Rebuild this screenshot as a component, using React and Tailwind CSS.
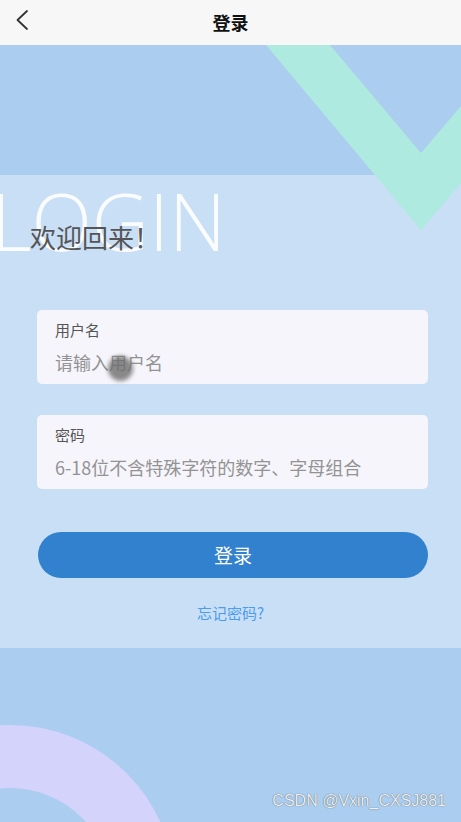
import React from "react";

const cjk = "font-['Noto_Sans_CJK_SC','Noto_Sans',sans-serif]";

const Field = ({ label, placeholder }) => (
  <label className="block bg-[#f6f5fb] rounded-[5px] px-[18px] pt-[10px] pb-[7px]">
    <span className="block text-[15px] leading-[20px] text-[#555]">{label}</span>
    <input
      type="text"
      placeholder={placeholder}
      className="mt-[7px] block w-full h-[30px] bg-transparent outline-none text-[18px] text-[#333] placeholder:text-[#939393]"
    />
  </label>
);

export default function App() {
  return (
    <div className={`relative w-full h-[822px] overflow-hidden bg-[#abcdef] ${cjk}`}>
      <header className="relative h-[45px] bg-[#f7f7f7] flex items-center justify-center">
        <button className="absolute left-[12px] top-[7px] w-[20px] h-[26px] flex items-center justify-center">
          <svg width="14" height="22" viewBox="0 0 14 22" fill="none">
            <path d="M12 2 L2.5 11 L12 20" stroke="#333" strokeWidth="1.8" strokeLinecap="round" strokeLinejoin="round" />
          </svg>
        </button>
        <h1 className="text-[18px] font-bold text-[#111]">登录</h1>
      </header>

      <div className="h-[130px]" />

      <section className="relative h-[473px] bg-[#c9dff5] pt-[44px]">
        <span className="absolute left-[-9px] top-[6px] font-['Open_Sans',sans-serif] font-[350] text-[79px] leading-none text-white/90 select-none">
          LOGIN
        </span>
        <h2 className="relative pl-[30px] text-[26px] leading-[36px] text-[#555]">欢迎回来！</h2>
        <div className="relative mt-[55px] ml-[37px] mr-[33px] flex flex-col gap-[31px]">
          <Field label="用户名" placeholder="请输入用户名" />
          <Field label="密码" placeholder="6-18位不含特殊字符的数字、字母组合" />
        </div>
        <div className="ml-[38px] mr-[33px] mt-[43px]">
          <button className="w-full h-[46px] rounded-full bg-[#3181cf] text-white text-[19px]">登录</button>
        </div>
        <p className="mt-[24px] text-center text-[15px] text-[#4c9cf0]">忘记密码?</p>
      </section>

      <svg className="absolute top-[45px] right-0" width="195" height="185" viewBox="0 0 195 185">
        <polygon points="0,0 64,0 155,108 195,61 195,138 155,185" fill="#aeeae0" />
      </svg>

      <svg className="absolute left-0 top-[648px]" width="461" height="174" viewBox="0 0 461 174">
        <circle cx="10" cy="242" r="133.5" fill="none" stroke="#d3d3fc" strokeWidth="63" />
      </svg>

      <div className="absolute left-[108px] top-[356px] w-[25px] h-[25px] rounded-full bg-[#6d6d6d]/80 blur-[2px]" />

      <span className="absolute right-[15px] bottom-[9px] font-['Liberation_Sans',sans-serif] text-[16px] text-[#eeeeee] [text-shadow:0_0_1px_rgba(0,0,0,0.7)]">
        CSDN @Vxin_CXSJ881
      </span>
    </div>
  );
}
